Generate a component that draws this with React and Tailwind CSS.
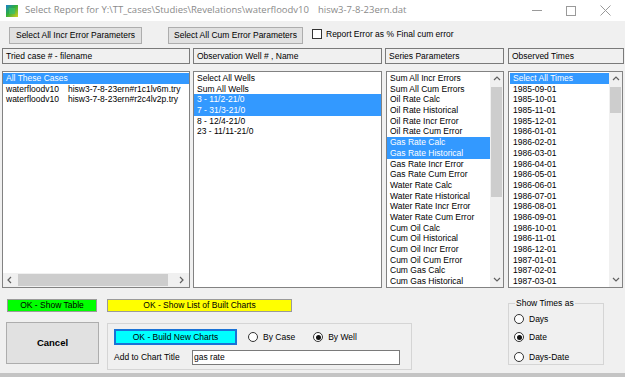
import React from "react";

const cases = [
  ["waterfloodv10", "hisw3-7-8-23ern#r1c1lv6m.try"],
  ["waterfloodv10", "hisw3-7-8-23ern#r2c4lv2p.try"],
];
const wells = ["Select All Wells", "Sum All Wells", "3 - 11/2-21/0", "7 - 31/3-21/0", "8 - 12/4-21/0", "23 - 11/11-21/0"];
const series = [
  "Sum All Incr Errors", "Sum All Cum Errors", "Oil Rate Calc", "Oil Rate Historical", "Oil Rate Incr Error",
  "Oil Rate Cum Error", "Gas Rate Calc", "Gas Rate Historical", "Gas Rate Incr Error", "Gas Rate Cum Error",
  "Water Rate Calc", "Water Rate Historical", "Water Rate Incr Error", "Water Rate Cum Error", "Cum Oil Calc",
  "Cum Oil Historical", "Cum Oil Incr Error", "Cum Oil Cum Error", "Cum Gas Calc", "Cum Gas Historical",
];
const times = [
  "Select All Times", "1985-09-01", "1985-10-01", "1985-11-01", "1985-12-01", "1986-01-01", "1986-02-01",
  "1986-03-01", "1986-04-01", "1986-05-01", "1986-06-01", "1986-07-01", "1986-08-01", "1986-09-01",
  "1986-10-01", "1986-11-01", "1986-12-01", "1987-01-01", "1987-02-01", "1987-03-01",
];

function Row({ sel, children }) {
  return (
    <div
      className={
        sel
          ? "h-[10.7px] leading-[10.7px] pl-[3px] whitespace-nowrap bg-[#3399ff] text-white"
          : "h-[10.7px] leading-[10.7px] pl-[3px] whitespace-nowrap"
      }
    >
      {children}
    </div>
  );
}

function Chevron({ dir }) {
  const pts = {
    up: "1,5 4,2 7,5",
    down: "1,2 4,5 7,2",
    left: "5,1 2,4 5,7",
    right: "2,1 5,4 2,7",
  }[dir];
  return (
    <svg width="8" height="8" viewBox="0 0 8 8">
      <polyline points={pts} fill="none" stroke="#606060" strokeWidth="1.2" />
    </svg>
  );
}

function VScroll({ thumb }) {
  return (
    <div className="w-[13px] shrink-0 flex flex-col bg-[#f0f0f0]">
      <div className="h-[14px] flex items-center justify-center">
        <Chevron dir="up" />
      </div>
      <div className="flex-1 px-[1px]">
        <div className={thumb} />
      </div>
      <div className="h-[14px] flex items-center justify-center">
        <Chevron dir="down" />
      </div>
    </div>
  );
}

function Radio({ on }) {
  return (
    <span className="w-[10px] h-[10px] rounded-full border border-[#333] bg-white flex items-center justify-center shrink-0">
      {on ? <span className="w-[5px] h-[5px] rounded-full bg-[#111]" /> : null}
    </span>
  );
}

function Header({ className, children }) {
  return (
    <div className={"h-[16px] border border-[#7a7a7a] bg-[#f0f0f0] pl-[3px] leading-[14px] whitespace-nowrap " + className}>
      {children}
    </div>
  );
}

export default function App() {
  return (
    <div className="w-[625px] h-[377px] overflow-hidden bg-[#f0f0f0] flex flex-col font-['Liberation_Sans',Arial,sans-serif] text-[8.5px] text-black">
      {/* Title bar */}
      <div className="h-[21px] shrink-0 bg-white flex items-center">
        <svg className="ml-[6px]" width="12" height="12" viewBox="0 0 12 12">
          <defs>
            <linearGradient id="ig" x1="0" y1="0" x2="1" y2="1">
              <stop offset="0" stopColor="#1a7fd0" />
              <stop offset="0.45" stopColor="#2fae3a" />
              <stop offset="1" stopColor="#d8d020" />
            </linearGradient>
          </defs>
          <rect x="0" y="0" width="12" height="12" fill="url(#ig)" />
          <rect x="3" y="3" width="6" height="6" fill="#3cc070" opacity="0.7" />
        </svg>
        <span className="ml-[7px] text-[9.5px] text-[#8a8a8a] whitespace-nowrap font-['Open_Sans',sans-serif]">
          Select Report for Y:\TT_cases\Studies\Revelations\waterfloodv10
          <span className="ml-[9px]">hisw3-7-8-23ern.dat</span>
        </span>
        <div className="ml-auto mr-[3px] flex h-full">
          <div className="w-[34px] flex items-center justify-center">
            <svg width="11" height="11" viewBox="0 0 11 11">
              <line x1="0" y1="5.5" x2="10" y2="5.5" stroke="#9a9a9a" strokeWidth="1" />
            </svg>
          </div>
          <div className="w-[34px] flex items-center justify-center">
            <svg width="10" height="10" viewBox="0 0 10 10">
              <rect x="0.5" y="0.5" width="9" height="9" fill="none" stroke="#9a9a9a" strokeWidth="1" />
            </svg>
          </div>
          <div className="w-[34px] flex items-center justify-center">
            <svg width="11" height="11" viewBox="0 0 11 11">
              <line x1="0.5" y1="0.5" x2="10.5" y2="10.5" stroke="#9a9a9a" strokeWidth="1" />
              <line x1="10.5" y1="0.5" x2="0.5" y2="10.5" stroke="#9a9a9a" strokeWidth="1" />
            </svg>
          </div>
        </div>
      </div>

      {/* Top buttons */}
      <div className="mt-[6px] h-[17px] flex items-start shrink-0">
        <div className="ml-[9px] w-[133px] h-[17px] bg-[#e1e1e1] border border-[#adadad] flex items-center justify-center whitespace-nowrap">
          Select All Incr Error Parameters
        </div>
        <div className="ml-[26px] w-[135px] h-[17px] bg-[#e1e1e1] border border-[#adadad] flex items-center justify-center whitespace-nowrap">
          Select All Cum Error Parameters
        </div>
        <div className="ml-[9px] mt-[1px] flex items-center">
          <span className="w-[10px] h-[10px] border border-[#333] bg-white" />
          <span className="ml-[4px] whitespace-nowrap">Report Error as % Final cum error</span>
        </div>
      </div>

      {/* Headers */}
      <div className="mt-[4px] flex shrink-0">
        <Header className="ml-[2px] w-[188px]">Tried case # - filename</Header>
        <Header className="ml-[3px] w-[189px]">Observation Well # , Name</Header>
        <Header className="ml-[3px] w-[119px]">Series Parameters</Header>
        <Header className="ml-[4px] w-[116px]">Observed Times</Header>
      </div>

      {/* Lists */}
      <div className="mt-[7px] h-[217px] flex shrink-0">
        <div className="ml-[2px] w-[188px] border border-[#828282] bg-white flex flex-col">
          <div className="flex-1 pt-[1px]">
            <Row sel>All These Cases</Row>
            {cases.map((c, i) => (
              <Row key={i}>
                <span className="inline-block w-[62px]">{c[0]}</span>
                {c[1]}
              </Row>
            ))}
          </div>
          <div className="h-[14px] flex bg-[#f0f0f0]">
            <div className="w-[14px] flex items-center justify-center">
              <Chevron dir="left" />
            </div>
            <div className="flex-1 py-[1px]">
              <div className="ml-[1px] w-[150px] h-full bg-[#cdcdcd]" />
            </div>
            <div className="w-[14px] flex items-center justify-center">
              <Chevron dir="right" />
            </div>
          </div>
        </div>

        <div className="ml-[3px] w-[189px] border border-[#828282] bg-white pt-[1px]">
          {wells.map((w, i) => (
            <Row key={i} sel={i === 2 || i === 3}>
              {w}
            </Row>
          ))}
        </div>

        <div className="ml-[4px] w-[118px] border border-[#828282] bg-white flex">
          <div className="flex-1 pt-[1px] overflow-hidden">
            {series.map((s, i) => (
              <Row key={i} sel={i === 6 || i === 7}>
                {s}
              </Row>
            ))}
          </div>
          <VScroll thumb="mt-[1px] h-[110px] bg-[#cdcdcd]" />
        </div>

        <div className="ml-[4px] w-[115px] border border-[#828282] bg-white flex">
          <div className="flex-1 pt-[1px] pl-[1px] overflow-hidden">
            {times.map((t, i) => (
              <Row key={i} sel={i === 0}>
                {t}
              </Row>
            ))}
          </div>
          <VScroll thumb="mt-[1px] h-[26px] bg-[#cdcdcd]" />
        </div>
      </div>

      {/* Bottom area */}
      <div className="flex shrink-0">
        <div className="w-[412px] flex flex-col">
          <div className="mt-[11px] flex">
            <div className="ml-[7px] w-[90px] h-[13px] bg-[#00ff00] border border-[#9a9a9a] flex items-center justify-center whitespace-nowrap">
              OK - Show Table
            </div>
            <div className="ml-[10px] w-[185px] h-[13px] bg-[#ffff00] border border-[#9a9a9a] flex items-center justify-center whitespace-nowrap">
              OK - Show List of Built Charts
            </div>
          </div>
          <div className="mt-[10px] flex items-start">
            <div className="ml-[6px] w-[93px] h-[42px] bg-[#e1e1e1] border border-[#adadad] flex items-center justify-center font-bold text-[9.5px]">
              Cancel
            </div>
            <div className="ml-[8px] mt-[1px] w-[305px] h-[47px] border border-[#d5d5d5] flex flex-col">
              <div className="mt-[5px] flex items-center">
                <div className="ml-[6px] w-[123px] h-[16px] bg-[#00ffff] border-2 border-[#1a72d6] flex items-center justify-center whitespace-nowrap">
                  OK - Build New Charts
                </div>
                <div className="ml-[11px] flex items-center">
                  <Radio />
                  <span className="ml-[5px]">By Case</span>
                </div>
                <div className="ml-[18px] flex items-center">
                  <Radio on />
                  <span className="ml-[5px]">By Well</span>
                </div>
              </div>
              <div className="mt-[5px] flex items-center">
                <span className="ml-[6px] w-[78px] whitespace-nowrap">Add to Chart Title</span>
                <div className="w-[208px] h-[15px] bg-white border border-[#7a7a7a] pl-[1px] leading-[13px]">gas rate</div>
              </div>
            </div>
          </div>
        </div>

        <fieldset className="ml-[96px] mt-[10px] w-[96px] h-[67px] border border-[#d5d5d5] flex flex-col">
          <legend className="ml-[6px] px-[1px] leading-[10.7px] whitespace-nowrap">Show Times as</legend>
          <div className="mt-[5px] ml-[5px] h-[11px] flex items-center">
            <Radio />
            <span className="ml-[5px]">Days</span>
          </div>
          <div className="mt-[7px] ml-[5px] h-[11px] flex items-center">
            <Radio on />
            <span className="ml-[5px]">Date</span>
          </div>
          <div className="mt-[9px] ml-[5px] h-[11px] flex items-center">
            <Radio />
            <span className="ml-[5px]">Days-Date</span>
          </div>
        </fieldset>
      </div>

      <div className="mt-auto h-[4px] bg-[#c4c4c4] shrink-0" />
    </div>
  );
}
